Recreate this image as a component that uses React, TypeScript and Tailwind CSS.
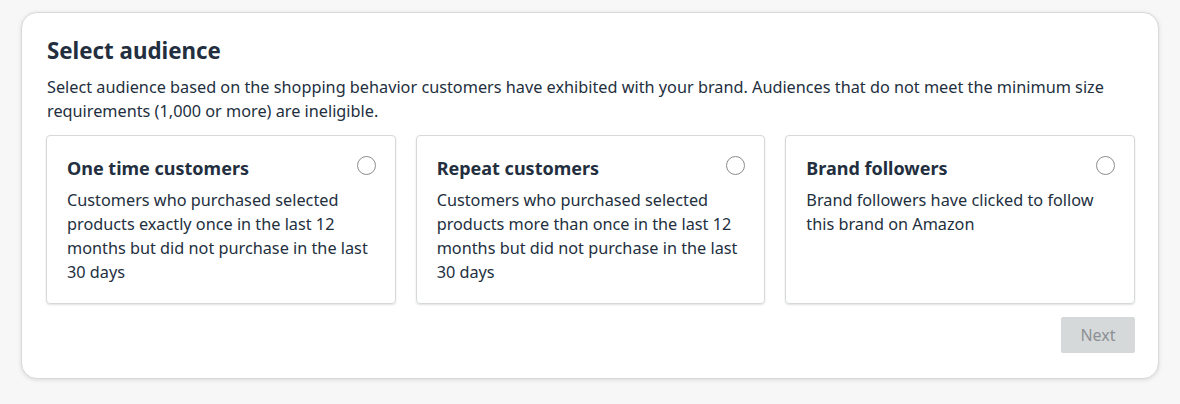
import React from "react";

const options = [
  {
    title: "One time customers",
    body: "Customers who purchased selected products exactly once in the last 12 months but did not purchase in the last 30 days",
  },
  {
    title: "Repeat customers",
    body: "Customers who purchased selected products more than once in the last 12 months but did not purchase in the last 30 days",
  },
  {
    title: "Brand followers",
    body: "Brand followers have clicked to follow this brand on Amazon",
  },
];

export default function App() {
  return (
    <div
      className="w-[1180px] h-[404px] bg-[#f7f7f7] pt-[12px] pl-[21px]"
      style={{ fontFamily: '"Noto Sans", "Open Sans", Arial, sans-serif' }}
    >
      <div className="w-[1138px] h-[367px] bg-white rounded-[16px] border border-[#d9d9d9] shadow-[0_1px_4px_rgba(0,0,0,0.12)] pl-[24px] pr-[23px] pt-[22px]">
        <h1 className="pl-[1px] text-[22.3px] leading-[32px] font-bold text-[#232f3e]">Select audience</h1>
        <p className="pl-[1px] mt-[8px] text-[16.25px] leading-[24px] text-[#232f3e] pr-[30px]">
          Select audience based on the shopping behavior customers have exhibited with your brand. Audiences that do not meet the minimum size requirements (1,000 or more) are ineligible.
        </p>
        <div className="mt-[12px] grid grid-cols-3 gap-[20px]">
          {options.map((o) => (
            <div
              key={o.title}
              className="h-[169px] rounded-[4px] border border-[#d5d9d9] shadow-[0_1px_2px_rgba(0,0,0,0.12)] pl-[20px] pr-[19px] pt-[19px]"
            >
              <div className="flex items-start justify-between">
                <div className="text-[18px] leading-[26px] font-bold text-[#232f3e]">{o.title}</div>
                <div className="mt-[1px] w-[19px] h-[19px] rounded-full border border-[#8c8c8c] bg-white" />
              </div>
              <p className="mt-[7px] text-[16.25px] leading-[24px] text-[#232f3e] pr-[4px]">{o.body}</p>
            </div>
          ))}
        </div>
        <div className="mt-[13px] flex justify-end">
          <button className="w-[74px] h-[36px] rounded-[2px] bg-[#d5d9d9] text-[16px] text-[#8d9096]">Next</button>
        </div>
      </div>
    </div>
  );
}
